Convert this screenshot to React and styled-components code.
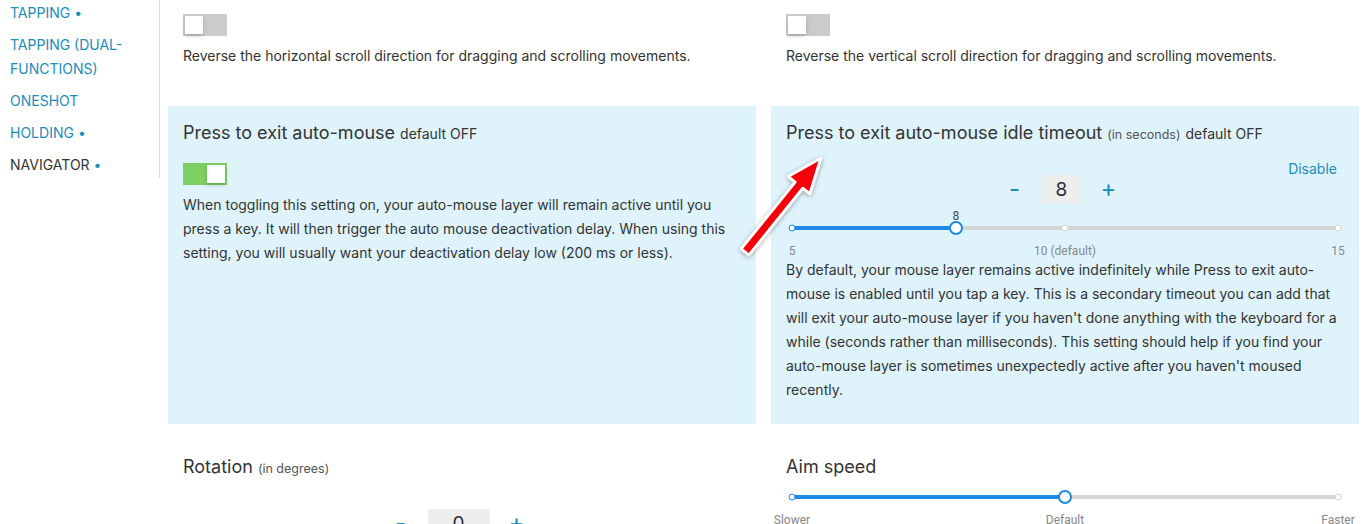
import React from "react";
import styled, { createGlobalStyle } from "styled-components";

const GlobalStyle = createGlobalStyle`
  html, body {
    margin: 0;
    padding: 0;
    background: #fff;
    overflow: hidden;
  }
  body {
    font-family: Inter, "Noto Sans", sans-serif;
    color: #333;
  }
`;

const Page = styled.div`
  position: relative;
  display: flex;
  align-items: flex-start;
  width: 1369px;
  height: 524px;
  overflow: hidden;
`;

const Sidebar = styled.nav`
  width: 149px;
  padding: 1px 0 0 10px;
  border-right: 1px solid #dcdcdc;
  flex-shrink: 0;
`;

const NavItem = styled.div`
  font-size: 14px;
  line-height: 24px;
  margin-bottom: 8px;
  text-transform: uppercase;
  color: ${(p) => (p.$active ? "#333" : "#1a8dba")};
  &:last-child {
    margin-bottom: 1px;
  }
`;

const Dot = styled.span`
  font-size: 14px;
  margin-left: 4px;
  color: #1a8dba;
`;

const Main = styled.main`
  flex: 1;
  padding: 0 10px 0 8px;
  display: grid;
  grid-template-columns: 1fr 1fr;
  column-gap: 15px;
  row-gap: 16px;
`;

const Card = styled.section`
  background: ${(p) => (p.$highlight ? "#dff3fc" : "#fff")};
  padding: ${(p) => p.$pad || "15px"};
`;

const Title = styled.h3`
  margin: 0;
  font-size: 18px;
  font-weight: 400;
  line-height: 24px;
  color: #333;
`;

const Small = styled.span`
  font-size: ${(p) => (p.$tiny ? "12.5px" : "14px")};
  color: ${(p) => (p.$tiny ? "#555" : "#333")};
  margin-left: 5px;
`;

const Text = styled.p`
  margin: 0;
  font-size: 14px;
  line-height: 24px;
  color: #333;
`;

const Track = styled.div`
  width: 44px;
  height: 22px;
  display: flex;
  align-items: center;
  justify-content: ${(p) => (p.$on ? "flex-end" : "flex-start")};
  padding: 0 2px;
  box-sizing: border-box;
  background: ${(p) => (p.$on ? "#7dcf62" : "#cbcbcb")};
  margin: ${(p) => p.$margin || "0"};
`;

const Knob = styled.div`
  width: 18px;
  height: 18px;
  background: #fff;
  box-shadow: 0 2px 4px rgba(0, 0, 0, 0.2);
`;

const Switch = ({ on, margin }) => (
  <Track $on={on} $margin={margin}>
    <Knob />
  </Track>
);

const StepperRow = styled.div`
  display: grid;
  grid-template-columns: 1fr auto 1fr;
  margin-top: 12px;
  padding-right: 7px;
`;

const LinkBtn = styled.span`
  grid-column: 3;
  justify-self: end;
  align-self: start;
  font-size: 14px;
  line-height: 20px;
  color: #1a8dba;
`;

const Stepper = styled.div`
  grid-column: 2;
  grid-row: 1;
  display: flex;
  align-items: center;
  gap: 14px;
  margin-top: 16px;
`;

const StepBtn = styled.span`
  width: 26px;
  text-align: center;
  font-size: 24px;
  line-height: 28px;
  color: #1a8dba;
`;

const ValueBox = styled.div`
  width: ${(p) => p.$w}px;
  height: 28px;
  background: #eeeeee;
  display: flex;
  align-items: center;
  justify-content: center;
  font-size: 19px;
  color: #2b2b3a;
`;

const NumberStepper = ({ value, width, link }) => (
  <StepperRow>
    <Stepper>
      <StepBtn>-</StepBtn>
      <ValueBox $w={width}>{value}</ValueBox>
      <StepBtn>+</StepBtn>
    </Stepper>
    {link && <LinkBtn>{link}</LinkBtn>}
  </StepperRow>
);

const SliderWrap = styled.div`
  padding: 0 6px;
  margin-top: ${(p) => p.$mt}px;
`;

const SliderBody = styled.div`
  position: relative;
  height: ${(p) => (p.$withValue ? 50 : 34)}px;
`;

const Rail = styled.div`
  position: absolute;
  left: 0;
  right: 0;
  top: ${(p) => p.$top}px;
  height: 4px;
  background: #d4d4d4;
  border-radius: 2px;
`;

const Fill = styled.div`
  height: 100%;
  background: #1e88e5;
`;

const Mark = styled.span`
  position: absolute;
  top: 50%;
  width: 5px;
  height: 5px;
  border-radius: 50%;
  transform: translate(-50%, -50%);
  background: #fff;
  border: 1.5px solid ${(p) => (p.$filled ? "#1e88e5" : "#d4d4d4")};
`;

const Thumb = styled.span`
  position: absolute;
  top: 50%;
  width: 10px;
  height: 10px;
  border-radius: 50%;
  transform: translate(-50%, -50%);
  background: #fff;
  border: 2px solid #1e88e5;
`;

const ValueLabel = styled.span`
  position: absolute;
  top: 0;
  transform: translateX(-50%);
  font-family: Roboto, sans-serif;
  font-size: 12px;
  line-height: 16px;
  color: #444;
`;

const TickLabel = styled.span`
  position: absolute;
  top: ${(p) => p.$top}px;
  transform: translateX(-50%);
  font-family: Roboto, sans-serif;
  font-size: 12px;
  line-height: 16px;
  color: #888;
  white-space: nowrap;
`;

const Slider = ({ pct, marks, showValue, value, mt }) => {
  const railTop = showValue ? 18 : 16;
  return (
    <SliderWrap $mt={mt}>
      <SliderBody $withValue={showValue}>
        {showValue && <ValueLabel style={{ left: `${pct}%` }}>{value}</ValueLabel>}
        <Rail $top={railTop}>
          <Fill style={{ width: `${pct}%` }} />
          {marks.map((m) => (
            <Mark key={m.at} $filled={m.at <= pct} style={{ left: `${m.at}%` }} />
          ))}
          <Thumb style={{ left: `${pct}%` }} />
        </Rail>
        {marks.map((m) => (
          <TickLabel key={m.label} $top={railTop + 17} style={{ left: `${m.at}%` }}>
            {m.label}
          </TickLabel>
        ))}
      </SliderBody>
    </SliderWrap>
  );
};

const Arrow = styled.svg`
  position: absolute;
  left: 730px;
  top: 145px;
  pointer-events: none;
  filter: drop-shadow(0 1px 2px rgba(0, 0, 0, 0.35));
`;

const nav = [
  { label: "Tapping", dot: true },
  { label: "Tapping (dual-functions)" },
  { label: "Oneshot" },
  { label: "Holding", dot: true },
  { label: "Navigator", dot: true, active: true },
];

export default function App() {
  return (
    <Page>
      <GlobalStyle />
      <Sidebar>
        {nav.map((n) => (
          <NavItem key={n.label} $active={n.active}>
            {n.label}
            {n.dot && <Dot>•</Dot>}
          </NavItem>
        ))}
      </Sidebar>

      <Main>
        <Card $pad="14px 15px 22px">
          <Switch margin="0 0 8px" />
          <Text>Reverse the horizontal scroll direction for dragging and scrolling movements.</Text>
        </Card>
        <Card $pad="14px 15px 22px">
          <Switch margin="0 0 8px" />
          <Text>Reverse the vertical scroll direction for dragging and scrolling movements.</Text>
        </Card>

        <Card $highlight>
          <Title>
            Press to exit auto-mouse<Small>default OFF</Small>
          </Title>
          <Switch on margin="17px 0 8px" />
          <Text>
            When toggling this setting on, your auto-mouse layer will remain active until you
            press a key. It will then trigger the auto mouse deactivation delay. When using this
            setting, you will usually want your deactivation delay low (200 ms or less).
          </Text>
        </Card>
        <Card $highlight $pad="15px 15px 22px">
          <Title>
            Press to exit auto-mouse idle timeout<Small $tiny>(in seconds)</Small>
            <Small>default OFF</Small>
          </Title>
          <NumberStepper value="8" width={40} link="Disable" />
          <Slider
            mt={5}
            pct={30}
            showValue
            value="8"
            marks={[
              { at: 0, label: "5" },
              { at: 50, label: "10 (default)" },
              { at: 100, label: "15" },
            ]}
          />
          <Text>
            By default, your mouse layer remains active indefinitely while Press to exit auto-mouse
            is enabled until you tap a key. This is a secondary timeout you can add that will exit
            your auto-mouse layer if you haven't done anything with the keyboard for a while
            (seconds rather than milliseconds). This setting should help if you find your
            auto-mouse layer is sometimes unexpectedly active after you haven't moused recently.
          </Text>
        </Card>

        <Card>
          <Title>
            Rotation<Small $tiny>(in degrees)</Small>
          </Title>
          <NumberStepper value="0" width={62} />
        </Card>
        <Card>
          <Title>Aim speed</Title>
          <Slider
            mt={0}
            pct={50}
            marks={[
              { at: 0, label: "Slower" },
              { at: 50, label: "Default" },
              { at: 100, label: "Faster" },
            ]}
          />
        </Card>
      </Main>

      <Arrow width="100" height="120" viewBox="730 145 100 120">
        <polygon
          points="748.9,255.1 802.9,188.3 809.9,194 821,158 788.1,176.4 795.1,182.1 741.1,248.9"
          fill="#f5000a"
          stroke="#fff"
          strokeWidth="3"
          strokeLinejoin="round"
        />
      </Arrow>
    </Page>
  );
}
